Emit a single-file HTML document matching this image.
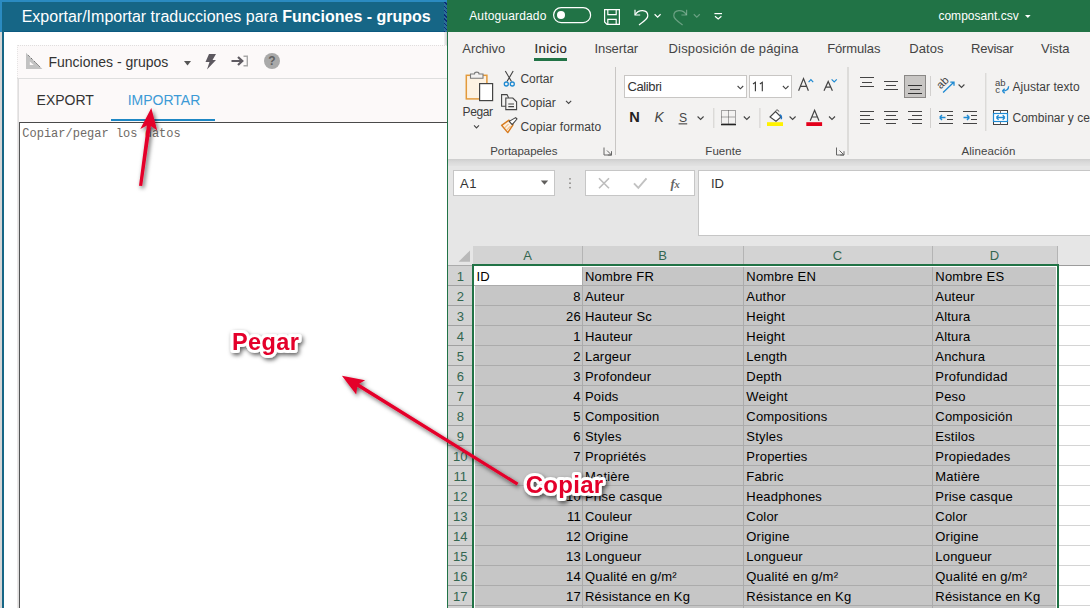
<!DOCTYPE html>
<html><head><meta charset="utf-8"><style>
html,body{margin:0;padding:0}
body{width:1090px;height:608px;overflow:hidden;position:relative;background:#d6d6d6;font-family:"Liberation Sans",sans-serif}
.a{position:absolute}
.t{position:absolute;white-space:pre;line-height:1;font-family:"Liberation Sans",sans-serif}
.m{position:absolute;white-space:pre;line-height:1;font-family:"Liberation Mono",monospace}
</style></head><body>
<div class="a" style="left:0px;top:0px;width:447px;height:608px;background:#d6d6d6;"></div>
<div class="a" style="left:0px;top:0px;width:447px;height:2px;background:#2b8bc1;"></div>
<div class="a" style="left:0px;top:2px;width:2px;height:30px;background:#2b8bc1;"></div>
<div class="a" style="left:2px;top:2px;width:442px;height:30px;background:#166686;"></div>
<div class="a" style="left:4px;top:31px;width:440px;height:1px;background:#0c5a80;"></div>
<div class="a" style="left:2px;top:2px;width:2px;height:606px;background:#166686;"></div>
<div class="a" style="left:4px;top:32px;width:440px;height:576px;background:#ffffff;"></div>
<div class="a" style="left:444px;top:2px;width:3px;height:30px;background:#1d4f8a;background-image:repeating-linear-gradient(45deg,#0b2c78 0 1px,#2a6e96 1px 3px)"></div>
<div class="a" style="left:444px;top:32px;width:3px;height:576px;background:#e9e9e9;background:linear-gradient(90deg,#f5f5f5,#cfcfcf)"></div>
<div class="a" style="left:17px;top:45px;width:430px;height:33px;background:#fcf9f9;border-top:1px dotted #e0dede;border-left:1px dotted #e6e4e4;box-sizing:border-box"></div>
<div class="a" style="left:17px;top:78px;width:430px;height:1px;background:#dedede;"></div>
<div class="a" style="left:17px;top:79px;width:430px;height:43px;background:#fcf9f9;"></div>
<div class="a" style="left:17px;top:79px;width:2px;height:529px;background:#e2e2e2;background:linear-gradient(90deg,#f0eded,#d9d9d9)"></div>
<div class="a" style="left:111px;top:119px;width:104px;height:2px;background:#1e87c4;"></div>
<div class="a" style="left:19px;top:122px;width:428px;height:1px;background:#4a4a4a;"></div>
<div class="a" style="left:19px;top:122px;width:1px;height:486px;background:#555555;"></div>
<div class="a" style="left:20px;top:123px;width:427px;height:485px;background:#ffffff;"></div>
<svg class="a" style="left:0;top:0" width="447" height="140" viewBox="0 0 447 140">
<path d="M26 52.8 L42.4 69 L26 69 Z" fill="#c2c2c2"/>
<path d="M29.8 61.4 L33.8 65 L29.8 65 Z" fill="#fcf9f9"/>
<path d="M28.3 55.3 l1.3 1.3 M31.1 58.1 l1.3 1.3 M34.2 61.2 l1.3 1.3 M36.3 63.3 l1.3 1.3 M38.4 65.4 l1.3 1.3" stroke="#6a6a6a" stroke-width="1"/>
<path d="M184 61 L191 61 L187.5 65.5 Z" fill="#555"/>
<path d="M209 54 L216 54 L212.5 60 L216 60 L207 69.5 L209.5 62 L205.5 62 Z" fill="#5d5960"/>
<path d="M231.5 61 L242 61 M238 57 L242.3 61 L238 65" stroke="#5f5b62" stroke-width="2.2" fill="none" stroke-linejoin="miter"/>
<path d="M243.5 56.3 L247.3 56.3 L247.3 65.7 L243.5 65.7" stroke="#a8a8a8" stroke-width="1.4" fill="none"/>
<circle cx="272" cy="61" r="8" fill="#a9a9a9"/>
<text x="272" y="65.3" text-anchor="middle" font-family="Liberation Sans" font-weight="bold" font-size="12" fill="#606060">?</text>
</svg>
<div class="a" style="left:447px;top:0px;width:643px;height:32px;background:#217346;"></div>
<div class="a" style="left:447px;top:32px;width:643px;height:127px;background:#f3f2f1;"></div>
<div class="a" style="left:447px;top:159px;width:643px;height:7px;background:#d4d4d4;background:linear-gradient(180deg,#cdcdcd 0,#d6d6d6 2px,#dcdcdc 4px,#e2e2e2 7px)"></div>
<div class="a" style="left:447px;top:166px;width:643px;height:80px;background:#e6e6e6;"></div>
<div class="a" style="left:447px;top:32px;width:1px;height:576px;background:#217346;"></div>
<div class="a" style="left:534px;top:58px;width:33px;height:2.6px;background:#217346;"></div>
<div class="a" style="left:453px;top:170px;width:102px;height:26px;background:#ffffff;border:1px solid #c6c6c6;box-sizing:border-box"></div>
<div class="a" style="left:585px;top:170px;width:110px;height:26px;background:#ffffff;border:1px solid #c6c6c6;box-sizing:border-box"></div>
<div class="a" style="left:698px;top:170px;width:400px;height:66px;background:#ffffff;border:1px solid #c6c6c6;box-sizing:border-box"></div>
<div class="a" style="left:448px;top:246px;width:642px;height:20px;background:#e6e6e6;"></div>
<div class="a" style="left:473px;top:246px;width:585px;height:18px;background:#d3d3d3;"></div>
<div class="a" style="left:582px;top:246px;width:1px;height:18px;background:#b4b4b4;"></div>
<div class="a" style="left:743px;top:246px;width:1px;height:18px;background:#b4b4b4;"></div>
<div class="a" style="left:932px;top:246px;width:1px;height:18px;background:#b4b4b4;"></div>
<div class="a" style="left:1057px;top:246px;width:1px;height:18px;background:#b4b4b4;"></div>
<div class="a" style="left:473px;top:264px;width:586px;height:2px;background:#217346;"></div>
<div class="a" style="left:448px;top:265px;width:25px;height:1px;background:#ababab;"></div>
<div class="a" style="left:1059px;top:265px;width:31px;height:1px;background:#9c9c9c;"></div>
<div class="a" style="left:448px;top:266px;width:24px;height:342px;background:#d2d2d2;"></div>
<div class="a" style="left:472px;top:264px;width:2px;height:344px;background:#217346;"></div>
<div class="a" style="left:474px;top:266px;width:583px;height:342px;background:#c6c6c6;"></div>
<div class="a" style="left:474px;top:266px;width:1px;height:342px;background:#ffffff;"></div>
<div class="a" style="left:474px;top:266px;width:582px;height:1px;background:#ffffff;"></div>
<div class="a" style="left:1056px;top:266px;width:1px;height:342px;background:#ffffff;"></div>
<div class="a" style="left:1057px;top:264px;width:2px;height:344px;background:#217346;"></div>
<div class="a" style="left:1059px;top:266px;width:31px;height:342px;background:#ffffff;"></div>
<div class="a" style="left:474px;top:266px;width:108px;height:19px;background:#ffffff;"></div>
<div class="a" style="left:448px;top:285px;width:24px;height:1px;background:#a0a0a0;"></div>
<div class="a" style="left:474px;top:285px;width:581px;height:1px;background:#ababab;"></div>
<div class="a" style="left:1059px;top:285px;width:31px;height:1px;background:#d4d4d4;"></div>
<div class="a" style="left:448px;top:305px;width:24px;height:1px;background:#a0a0a0;"></div>
<div class="a" style="left:475px;top:305px;width:581px;height:1px;background:#ababab;"></div>
<div class="a" style="left:1059px;top:305px;width:31px;height:1px;background:#d4d4d4;"></div>
<div class="a" style="left:448px;top:325px;width:24px;height:1px;background:#a0a0a0;"></div>
<div class="a" style="left:475px;top:325px;width:581px;height:1px;background:#ababab;"></div>
<div class="a" style="left:1059px;top:325px;width:31px;height:1px;background:#d4d4d4;"></div>
<div class="a" style="left:448px;top:345px;width:24px;height:1px;background:#a0a0a0;"></div>
<div class="a" style="left:475px;top:345px;width:581px;height:1px;background:#ababab;"></div>
<div class="a" style="left:1059px;top:345px;width:31px;height:1px;background:#d4d4d4;"></div>
<div class="a" style="left:448px;top:365px;width:24px;height:1px;background:#a0a0a0;"></div>
<div class="a" style="left:475px;top:365px;width:581px;height:1px;background:#ababab;"></div>
<div class="a" style="left:1059px;top:365px;width:31px;height:1px;background:#d4d4d4;"></div>
<div class="a" style="left:448px;top:385px;width:24px;height:1px;background:#a0a0a0;"></div>
<div class="a" style="left:475px;top:385px;width:581px;height:1px;background:#ababab;"></div>
<div class="a" style="left:1059px;top:385px;width:31px;height:1px;background:#d4d4d4;"></div>
<div class="a" style="left:448px;top:405px;width:24px;height:1px;background:#a0a0a0;"></div>
<div class="a" style="left:475px;top:405px;width:581px;height:1px;background:#ababab;"></div>
<div class="a" style="left:1059px;top:405px;width:31px;height:1px;background:#d4d4d4;"></div>
<div class="a" style="left:448px;top:425px;width:24px;height:1px;background:#a0a0a0;"></div>
<div class="a" style="left:475px;top:425px;width:581px;height:1px;background:#ababab;"></div>
<div class="a" style="left:1059px;top:425px;width:31px;height:1px;background:#d4d4d4;"></div>
<div class="a" style="left:448px;top:445px;width:24px;height:1px;background:#a0a0a0;"></div>
<div class="a" style="left:475px;top:445px;width:581px;height:1px;background:#ababab;"></div>
<div class="a" style="left:1059px;top:445px;width:31px;height:1px;background:#d4d4d4;"></div>
<div class="a" style="left:448px;top:465px;width:24px;height:1px;background:#a0a0a0;"></div>
<div class="a" style="left:475px;top:465px;width:581px;height:1px;background:#ababab;"></div>
<div class="a" style="left:1059px;top:465px;width:31px;height:1px;background:#d4d4d4;"></div>
<div class="a" style="left:448px;top:485px;width:24px;height:1px;background:#a0a0a0;"></div>
<div class="a" style="left:475px;top:485px;width:581px;height:1px;background:#ababab;"></div>
<div class="a" style="left:1059px;top:485px;width:31px;height:1px;background:#d4d4d4;"></div>
<div class="a" style="left:448px;top:505px;width:24px;height:1px;background:#a0a0a0;"></div>
<div class="a" style="left:475px;top:505px;width:581px;height:1px;background:#ababab;"></div>
<div class="a" style="left:1059px;top:505px;width:31px;height:1px;background:#d4d4d4;"></div>
<div class="a" style="left:448px;top:525px;width:24px;height:1px;background:#a0a0a0;"></div>
<div class="a" style="left:475px;top:525px;width:581px;height:1px;background:#ababab;"></div>
<div class="a" style="left:1059px;top:525px;width:31px;height:1px;background:#d4d4d4;"></div>
<div class="a" style="left:448px;top:545px;width:24px;height:1px;background:#a0a0a0;"></div>
<div class="a" style="left:475px;top:545px;width:581px;height:1px;background:#ababab;"></div>
<div class="a" style="left:1059px;top:545px;width:31px;height:1px;background:#d4d4d4;"></div>
<div class="a" style="left:448px;top:565px;width:24px;height:1px;background:#a0a0a0;"></div>
<div class="a" style="left:475px;top:565px;width:581px;height:1px;background:#ababab;"></div>
<div class="a" style="left:1059px;top:565px;width:31px;height:1px;background:#d4d4d4;"></div>
<div class="a" style="left:448px;top:585px;width:24px;height:1px;background:#a0a0a0;"></div>
<div class="a" style="left:475px;top:585px;width:581px;height:1px;background:#ababab;"></div>
<div class="a" style="left:1059px;top:585px;width:31px;height:1px;background:#d4d4d4;"></div>
<div class="a" style="left:448px;top:605px;width:24px;height:1px;background:#a0a0a0;"></div>
<div class="a" style="left:475px;top:605px;width:581px;height:1px;background:#ababab;"></div>
<div class="a" style="left:1059px;top:605px;width:31px;height:1px;background:#d4d4d4;"></div>
<div class="a" style="left:582px;top:267px;width:1px;height:341px;background:#ababab;"></div>
<div class="a" style="left:743px;top:267px;width:1px;height:341px;background:#ababab;"></div>
<div class="a" style="left:932px;top:267px;width:1px;height:341px;background:#ababab;"></div>
<svg class="a" style="left:0;top:0" width="1090" height="608" viewBox="0 0 1090 608">
<g fill="none" stroke="#fff" stroke-width="1.2">
<rect x="553.6" y="7.6" width="37" height="15" rx="7.5"/>
<path d="M604.6 9.6 H619.4 V24.4 H607 L604.6 22 Z"/>
<path d="M607.8 9.6 V14.6 H616.2 V9.6"/>
<path d="M607.8 24.4 V19.4 H616.2 V24.4"/>
<path d="M635 9.8 V15 H640.2"/>
<path d="M635.2 14.8 C638.5 9, 647.8 9.2, 647.8 15.8 C647.8 18, 646.5 19.5, 639 25"/>
<path d="M654.6 14.3 L657.6 17.1 L660.6 14.3"/>
<path d="M714.4 13.6 H722"/>
<path d="M715 16.2 L718.2 19 L721.4 16.2"/>
</g>
<g fill="none" stroke="rgba(255,255,255,0.33)" stroke-width="1.2">
<path d="M686.6 9.8 V15 H681.4"/>
<path d="M686.4 14.8 C683.1 9, 673.8 9.2, 673.8 15.8 C673.8 18, 675.1 19.5, 682.6 25"/>
<path d="M693.8 14.3 L696.8 17.1 L699.8 14.3"/>
</g>
<circle cx="561" cy="15.1" r="4" fill="#fff"/>
<path d="M1025 15 H1030.6 L1027.8 17.9 Z" fill="#fff"/>

<!-- Portapapeles -->
<rect x="466.3" y="75.3" width="20.6" height="23.6" fill="#fdf2e2" stroke="#e39a3b" stroke-width="1.5"/>
<path d="M470.5 78.3 V74 H474.5 C474.5 71.5, 479 71.5, 479 74 H483 V78.3 Z" fill="#f3f2f1" stroke="#7a7a7a" stroke-width="1.1"/>
<rect x="479.6" y="83.6" width="13" height="17" fill="#fff" stroke="#444" stroke-width="1.2"/>
<path d="M474 125.4 L476.5 127.9 L479 125.4" fill="none" stroke="#444" stroke-width="1.1"/>
<g stroke="#444" stroke-width="1.1" fill="none">
<path d="M505.3 71 L511.5 81.5 M513.2 71 L507 81.5"/>
</g>
<circle cx="506.3" cy="84" r="2" fill="none" stroke="#1f8ad2" stroke-width="1.3"/>
<circle cx="512.3" cy="84" r="2" fill="none" stroke="#1f8ad2" stroke-width="1.3"/>
<g stroke="#444" stroke-width="1.1" fill="none">
<path d="M508.6 97.8 L507 94.6 H501.6 V106.2 H505.8"/>
<path d="M505.8 98 H512.8 L516.6 101.8 V109.6 H505.8 Z"/>
<path d="M508.3 104 H514 M508.3 106.6 H514"/>
<path d="M566 100.8 L568.6 103.4 L571.2 100.8"/>
</g>
<path d="M501.6 125.3 L509 120.2 L513 124.8 L507.8 132.6 Z" fill="#fdeedd" stroke="#d77b1e" stroke-width="1.4" stroke-linejoin="round"/>
<path d="M504.5 128 L508.5 124 M506.5 130.2 L510.5 126" stroke="#e9a45a" stroke-width="0.9"/>
<path d="M509.2 121.4 L515.6 117.6 L517 119 L512.2 124.6 Z" fill="#fff" stroke="#444" stroke-width="1.1" stroke-linejoin="round"/>
<path d="M604 147.5 V155 H611.8 M607 150.5 L611.5 155 M611.5 151.2 V155 H607.8" fill="none" stroke="#666" stroke-width="1"/>
<rect x="615" y="67" width="1" height="88" fill="#c8c6c4"/>
<rect x="847.5" y="67" width="1" height="88" fill="#c8c6c4"/>
<rect x="985.3" y="73" width="1" height="58" fill="#d2d0ce"/>

<!-- Fuente -->
<rect x="624.5" y="75.5" width="122" height="22" fill="#fff" stroke="#c8c6c4"/>
<rect x="749.5" y="75.5" width="42" height="22" fill="#fff" stroke="#c8c6c4"/>
<g fill="none" stroke="#444" stroke-width="1.1">
<path d="M737.6 86 L740.4 88.8 L743.2 86"/>
<path d="M782.9 86 L785.7 88.8 L788.5 86"/>
<path d="M697.6 116.5 L700.6 119.5 L703.6 116.5"/>
<path d="M743.8 116.5 L746.8 119.5 L749.8 116.5"/>
<path d="M789.6 116.5 L792.6 119.5 L795.6 116.5"/>
<path d="M829 116.5 L832 119.5 L835 116.5"/>
<path d="M836.5 147.5 V155 H844 M839.5 150.5 L844 155 M844 151.2 V155 H840.3" stroke="#666" stroke-width="1"/>
</g>
<path d="M798.6 90.8 L803.5 78.6 L808.4 90.8 M800.4 86.3 H806.6" stroke="#444" stroke-width="1.2" fill="none"/>
<path d="M824 90.8 L828.2 81.4 L832.4 90.8 M825.6 87.2 H830.8" stroke="#444" stroke-width="1.2" fill="none"/>
<path d="M808.6 82.2 L810.9 79.6 L813.2 82.2" fill="none" stroke="#1f8ad2" stroke-width="1.2"/>
<path d="M831.6 79.4 L834.2 82 L836.8 79.4" fill="none" stroke="#1f8ad2" stroke-width="1.2"/>
<text x="629.3" y="122" font-family="Liberation Sans" font-weight="bold" font-size="14.6" fill="#222">N</text>
<text x="654.4" y="122" font-family="Liberation Sans" font-style="italic" font-size="13.8" fill="#444">K</text>
<text x="679" y="122" font-family="Liberation Sans" font-size="13.5" fill="#444" transform="translate(679,122) scale(0.9,1) translate(-679,-122)">S</text>
<rect x="678.6" y="123.3" width="8.6" height="1.1" fill="#444"/>
<rect x="713.3" y="108" width="1" height="20" fill="#d2d0ce"/>
<rect x="759.4" y="108" width="1" height="20" fill="#d2d0ce"/>
<path d="M721.5 110.5 H735.5 V123.5 H721.5 Z M728.5 110.5 V123.5 M721.5 117 H735.5" fill="none" stroke="#555" stroke-width="1" stroke-dasharray="1 1"/>
<rect x="721" y="124" width="15" height="1.3" fill="#222"/>
<path d="M770 117 L775.5 111.5 L781 117 L776 121.2 Z" fill="#fff" stroke="#444" stroke-width="1.1"/>
<path d="M775.5 111 C776.5 109.5, 778.5 109.8, 778.8 111.5" fill="none" stroke="#444" stroke-width="1"/><path d="M779.8 114 C781.8 114.5, 782.6 116.5, 782 119.3 L780.6 119.3 C780.8 117.5, 780.5 116, 779.6 115.2 Z" fill="#1f74c4"/>
<rect x="767" y="122.2" width="16" height="3.8" fill="#fff200"/>
<path d="M810.2 120.8 L814.6 110.2 L819 120.8 M811.8 117 H817.4" stroke="#444" stroke-width="1.2" fill="none"/>
<rect x="806.3" y="122.2" width="15.8" height="3.8" fill="#e3001b"/>

<path d="M755.4 91.2 V82.4 L753 84 M762.3 91.2 V82.4 L759.9 84" stroke="#333" stroke-width="1.1" fill="none"/>
<!-- Alineacion -->
<g stroke="#444" stroke-width="1" fill="none">
<path d="M860 77.5 H874 M862 82.5 H872 M860 86.5 H874"/>
<path d="M884 81.5 H898 M886 85.5 H896 M884 89.5 H898"/>
<path d="M860 111.5 H874 M860 115.5 H870 M860 119.5 H874 M860 123.5 H870"/>
<path d="M884 111.5 H898 M886 115.5 H896 M884 119.5 H898 M886 123.5 H896"/>
<path d="M908 111.5 H922 M912 115.5 H922 M908 119.5 H922 M912 123.5 H922"/>
<path d="M939 111.5 H953 M947 115.5 H953 M947 119.5 H953 M939 123.5 H953"/>
<path d="M963 111.5 H977 M971 115.5 H977 M971 119.5 H977 M963 123.5 H977"/>
</g>
<rect x="904.5" y="75.5" width="21" height="22" fill="#c8c6c4" stroke="#8a8886"/>
<path d="M908 85.5 H922 M910 89.5 H920 M908 93.5 H922" stroke="#333" stroke-width="1" fill="none"/>
<rect x="930" y="76" width="1" height="20" fill="#d2d0ce"/>
<rect x="930" y="108" width="1" height="20" fill="#d2d0ce"/>
<path d="M939.6 117.5 L945.5 117.5 M939.6 117.5 L942 115 M939.6 117.5 L942 120" stroke="#1f8ad2" stroke-width="1.4" fill="none"/>
<path d="M963.5 117.5 L969.4 117.5 M969.4 117.5 L967 115 M969.4 117.5 L967 120" stroke="#1f8ad2" stroke-width="1.4" fill="none"/>
<text x="0" y="0" font-family="Liberation Sans" font-size="11" fill="#444" transform="translate(940.8,89.6) rotate(-45)">ab</text>
<path d="M943.1 92.5 L954 82 M950.3 82.2 H954 V85.8" stroke="#1f8ad2" stroke-width="1.3" fill="none"/>
<path d="M958.6 84.5 L961.5 87.4 L964.4 84.5" fill="none" stroke="#444" stroke-width="1.1"/>
<text x="995" y="85.6" font-family="Liberation Sans" font-size="9.5" fill="#444">ab</text>
<text x="995.2" y="92.6" font-family="Liberation Sans" font-size="9.5" fill="#444">c</text>
<path d="M1008.6 86.2 C1008.6 89.8, 1006.5 91, 1002.4 91 M1002.4 91 L1004.7 88.7 M1002.4 91 L1004.7 93.3" stroke="#1f8ad2" stroke-width="1.3" fill="none"/>
<rect x="993.5" y="110.5" width="14" height="14" fill="#fff" stroke="#444" stroke-width="1"/>
<path d="M1000.5 110.5 V113.5 M1000.5 121.5 V124.5" stroke="#7a6a66" stroke-width="1" fill="none"/>
<rect x="993.5" y="113.5" width="14" height="8" fill="#fff" stroke="#1f8ad2" stroke-width="1.2"/>
<path d="M996.5 117.5 H1004.8 M996.3 117.5 L998.6 115.3 M996.3 117.5 L998.6 119.7 M1005 117.5 L1002.7 115.3 M1005 117.5 L1002.7 119.7" stroke="#1f8ad2" stroke-width="1.3" fill="none"/>

<!-- formula bar -->
<path d="M540.8 180.4 H548.2 L544.5 184.8 Z" fill="#605e5c"/>
<circle cx="570" cy="178.8" r="0.9" fill="#8a8886"/><circle cx="570" cy="183.2" r="0.9" fill="#8a8886"/><circle cx="570" cy="187.6" r="0.9" fill="#8a8886"/>
<path d="M599 178.3 L609 188.3 M609 178.3 L599 188.3" stroke="#bdbdbd" stroke-width="1.6"/>
<path d="M634 183.3 L638.3 187.8 L646.5 178.3" stroke="#c2c2c2" stroke-width="1.9" fill="none"/>
<text x="670.5" y="187.5" font-family="Liberation Serif" font-style="italic" font-weight="bold" font-size="13" fill="#666">f</text>
<text x="674.5" y="187.5" font-family="Liberation Serif" font-style="italic" font-weight="bold" font-size="10.5" fill="#666">x</text>
<path d="M458.6 261.8 L470 250.4 V261.8 Z" fill="#b9b9b9"/>
</svg>

<div class="t" style="left:21.70px;top:9.00px;font-size:16px;color:#ffffff;">Exportar/Importar traducciones para </div>
<div class="t" style="left:282.30px;top:9.00px;font-size:16px;color:#ffffff;font-weight:bold;">Funciones - grupos</div>
<div class="t" style="left:48.50px;top:54.80px;font-size:14px;color:#333333;">Funciones - grupos</div>
<div class="t" style="left:36.60px;top:93.10px;font-size:14px;color:#333333;">EXPORT</div>
<div class="t" style="left:127.70px;top:93.10px;font-size:14px;color:#3c9ad6;">IMPORTAR</div>
<div class="m" style="left:22.30px;top:127.68px;font-size:12px;color:#6e6a66;">Copiar/pegar los datos</div>
<div class="t" style="left:469.20px;top:9.60px;font-size:12px;color:#ffffff;letter-spacing:0.163px;">Autoguardado</div>
<div class="t" style="left:938.40px;top:9.80px;font-size:12px;color:#ffffff;letter-spacing:0.029px;">composant.csv</div>
<div class="t" style="left:462.30px;top:41.85px;font-size:13px;color:#444444;letter-spacing:-0.060px;">Archivo</div>
<div class="t" style="left:534.60px;top:41.85px;font-size:13px;color:#252423;letter-spacing:0.368px;-webkit-text-stroke:0.12px #252423;">Inicio</div>
<div class="t" style="left:594.40px;top:41.85px;font-size:13px;color:#444444;letter-spacing:-0.040px;">Insertar</div>
<div class="t" style="left:668.60px;top:41.85px;font-size:13px;color:#444444;letter-spacing:0.140px;">Disposición de página</div>
<div class="t" style="left:827.20px;top:41.85px;font-size:13px;color:#444444;letter-spacing:-0.141px;">Fórmulas</div>
<div class="t" style="left:909.30px;top:41.85px;font-size:13px;color:#444444;letter-spacing:0.033px;">Datos</div>
<div class="t" style="left:971.00px;top:41.85px;font-size:13px;color:#444444;letter-spacing:-0.246px;">Revisar</div>
<div class="t" style="left:1041.00px;top:41.85px;font-size:13px;color:#444444;letter-spacing:-0.018px;">Vista</div>
<div class="t" style="left:462.50px;top:106.30px;font-size:12px;color:#3e3e3e;letter-spacing:-0.358px;">Pegar</div>
<div class="t" style="left:520.40px;top:73.20px;font-size:12px;color:#3e3e3e;letter-spacing:-0.049px;">Cortar</div>
<div class="t" style="left:520.40px;top:97.20px;font-size:12px;color:#3e3e3e;letter-spacing:0.008px;">Copiar</div>
<div class="t" style="left:520.40px;top:121.00px;font-size:12px;color:#3e3e3e;letter-spacing:0.110px;">Copiar formato</div>
<div class="t" style="left:490.20px;top:145.72px;font-size:11.5px;color:#444444;letter-spacing:-0.044px;">Portapapeles</div>
<div class="t" style="left:627.50px;top:79.95px;font-size:13px;color:#333333;letter-spacing:-0.391px;">Calibri</div>
<div class="t" style="left:705.30px;top:145.53px;font-size:11.5px;color:#444444;letter-spacing:0.077px;">Fuente</div>
<div class="t" style="left:961.40px;top:145.53px;font-size:11.5px;color:#444444;letter-spacing:0.091px;">Alineación</div>
<div class="t" style="left:1012.50px;top:80.50px;font-size:12px;color:#3e3e3e;letter-spacing:0.033px;">Ajustar texto</div>
<div class="t" style="left:1012.50px;top:112.30px;font-size:12px;color:#3e3e3e;">Combinar y centrar</div>
<div class="t" style="left:460.00px;top:176.95px;font-size:13px;color:#333333;letter-spacing:0.694px;">A1</div>
<div class="t" style="left:711.00px;top:176.95px;font-size:13px;color:#333333;">ID</div>
<div class="t" style="left:523.16px;top:248.95px;font-size:13px;color:#336650;">A</div>
<div class="t" style="left:658.16px;top:248.95px;font-size:13px;color:#336650;">B</div>
<div class="t" style="left:832.80px;top:248.95px;font-size:13px;color:#336650;">C</div>
<div class="t" style="left:989.80px;top:248.95px;font-size:13px;color:#336650;">D</div>
<div class="t" style="left:456.68px;top:270.25px;font-size:13px;color:#336650;">1</div>
<div class="t" style="left:476.50px;top:270.25px;font-size:13px;color:#000000;letter-spacing:0.2px;">ID</div>
<div class="t" style="left:585.00px;top:270.25px;font-size:13px;color:#000000;letter-spacing:0.2px;">Nombre FR</div>
<div class="t" style="left:746.30px;top:270.25px;font-size:13px;color:#000000;letter-spacing:0.2px;">Nombre EN</div>
<div class="t" style="left:935.30px;top:270.25px;font-size:13px;color:#000000;letter-spacing:0.2px;">Nombre ES</div>
<div class="t" style="left:456.68px;top:290.25px;font-size:13px;color:#336650;">2</div>
<div class="t" style="left:573.27px;top:290.25px;font-size:13px;color:#000000;letter-spacing:0.2px;">8</div>
<div class="t" style="left:585.00px;top:290.25px;font-size:13px;color:#000000;letter-spacing:0.2px;">Auteur</div>
<div class="t" style="left:746.30px;top:290.25px;font-size:13px;color:#000000;letter-spacing:0.2px;">Author</div>
<div class="t" style="left:935.30px;top:290.25px;font-size:13px;color:#000000;letter-spacing:0.2px;">Auteur</div>
<div class="t" style="left:456.68px;top:310.25px;font-size:13px;color:#336650;">3</div>
<div class="t" style="left:566.03px;top:310.25px;font-size:13px;color:#000000;letter-spacing:0.2px;">26</div>
<div class="t" style="left:585.00px;top:310.25px;font-size:13px;color:#000000;letter-spacing:0.2px;">Hauteur Sc</div>
<div class="t" style="left:746.30px;top:310.25px;font-size:13px;color:#000000;letter-spacing:0.2px;">Height</div>
<div class="t" style="left:935.30px;top:310.25px;font-size:13px;color:#000000;letter-spacing:0.2px;">Altura</div>
<div class="t" style="left:456.68px;top:330.25px;font-size:13px;color:#336650;">4</div>
<div class="t" style="left:573.27px;top:330.25px;font-size:13px;color:#000000;letter-spacing:0.2px;">1</div>
<div class="t" style="left:585.00px;top:330.25px;font-size:13px;color:#000000;letter-spacing:0.2px;">Hauteur</div>
<div class="t" style="left:746.30px;top:330.25px;font-size:13px;color:#000000;letter-spacing:0.2px;">Height</div>
<div class="t" style="left:935.30px;top:330.25px;font-size:13px;color:#000000;letter-spacing:0.2px;">Altura</div>
<div class="t" style="left:456.68px;top:350.25px;font-size:13px;color:#336650;">5</div>
<div class="t" style="left:573.27px;top:350.25px;font-size:13px;color:#000000;letter-spacing:0.2px;">2</div>
<div class="t" style="left:585.00px;top:350.25px;font-size:13px;color:#000000;letter-spacing:0.2px;">Largeur</div>
<div class="t" style="left:746.30px;top:350.25px;font-size:13px;color:#000000;letter-spacing:0.2px;">Length</div>
<div class="t" style="left:935.30px;top:350.25px;font-size:13px;color:#000000;letter-spacing:0.2px;">Anchura</div>
<div class="t" style="left:456.68px;top:370.25px;font-size:13px;color:#336650;">6</div>
<div class="t" style="left:573.27px;top:370.25px;font-size:13px;color:#000000;letter-spacing:0.2px;">3</div>
<div class="t" style="left:585.00px;top:370.25px;font-size:13px;color:#000000;letter-spacing:0.2px;">Profondeur</div>
<div class="t" style="left:746.30px;top:370.25px;font-size:13px;color:#000000;letter-spacing:0.2px;">Depth</div>
<div class="t" style="left:935.30px;top:370.25px;font-size:13px;color:#000000;letter-spacing:0.2px;">Profundidad</div>
<div class="t" style="left:456.68px;top:390.25px;font-size:13px;color:#336650;">7</div>
<div class="t" style="left:573.27px;top:390.25px;font-size:13px;color:#000000;letter-spacing:0.2px;">4</div>
<div class="t" style="left:585.00px;top:390.25px;font-size:13px;color:#000000;letter-spacing:0.2px;">Poids</div>
<div class="t" style="left:746.30px;top:390.25px;font-size:13px;color:#000000;letter-spacing:0.2px;">Weight</div>
<div class="t" style="left:935.30px;top:390.25px;font-size:13px;color:#000000;letter-spacing:0.2px;">Peso</div>
<div class="t" style="left:456.68px;top:410.25px;font-size:13px;color:#336650;">8</div>
<div class="t" style="left:573.27px;top:410.25px;font-size:13px;color:#000000;letter-spacing:0.2px;">5</div>
<div class="t" style="left:585.00px;top:410.25px;font-size:13px;color:#000000;letter-spacing:0.2px;">Composition</div>
<div class="t" style="left:746.30px;top:410.25px;font-size:13px;color:#000000;letter-spacing:0.2px;">Compositions</div>
<div class="t" style="left:935.30px;top:410.25px;font-size:13px;color:#000000;letter-spacing:0.2px;">Composición</div>
<div class="t" style="left:456.68px;top:430.25px;font-size:13px;color:#336650;">9</div>
<div class="t" style="left:573.27px;top:430.25px;font-size:13px;color:#000000;letter-spacing:0.2px;">6</div>
<div class="t" style="left:585.00px;top:430.25px;font-size:13px;color:#000000;letter-spacing:0.2px;">Styles</div>
<div class="t" style="left:746.30px;top:430.25px;font-size:13px;color:#000000;letter-spacing:0.2px;">Styles</div>
<div class="t" style="left:935.30px;top:430.25px;font-size:13px;color:#000000;letter-spacing:0.2px;">Estilos</div>
<div class="t" style="left:453.07px;top:450.25px;font-size:13px;color:#336650;">10</div>
<div class="t" style="left:573.27px;top:450.25px;font-size:13px;color:#000000;letter-spacing:0.2px;">7</div>
<div class="t" style="left:585.00px;top:450.25px;font-size:13px;color:#000000;letter-spacing:0.2px;">Propriétés</div>
<div class="t" style="left:746.30px;top:450.25px;font-size:13px;color:#000000;letter-spacing:0.2px;">Properties</div>
<div class="t" style="left:935.30px;top:450.25px;font-size:13px;color:#000000;letter-spacing:0.2px;">Propiedades</div>
<div class="t" style="left:453.55px;top:470.25px;font-size:13px;color:#336650;">11</div>
<div class="t" style="left:573.27px;top:470.25px;font-size:13px;color:#000000;letter-spacing:0.2px;">9</div>
<div class="t" style="left:585.00px;top:470.25px;font-size:13px;color:#000000;letter-spacing:0.2px;">Matière</div>
<div class="t" style="left:746.30px;top:470.25px;font-size:13px;color:#000000;letter-spacing:0.2px;">Fabric</div>
<div class="t" style="left:935.30px;top:470.25px;font-size:13px;color:#000000;letter-spacing:0.2px;">Matière</div>
<div class="t" style="left:453.07px;top:490.25px;font-size:13px;color:#336650;">12</div>
<div class="t" style="left:566.03px;top:490.25px;font-size:13px;color:#000000;letter-spacing:0.2px;">10</div>
<div class="t" style="left:585.00px;top:490.25px;font-size:13px;color:#000000;letter-spacing:0.2px;">Prise casque</div>
<div class="t" style="left:746.30px;top:490.25px;font-size:13px;color:#000000;letter-spacing:0.2px;">Headphones</div>
<div class="t" style="left:935.30px;top:490.25px;font-size:13px;color:#000000;letter-spacing:0.2px;">Prise casque</div>
<div class="t" style="left:453.07px;top:510.25px;font-size:13px;color:#336650;">13</div>
<div class="t" style="left:567.00px;top:510.25px;font-size:13px;color:#000000;letter-spacing:0.2px;">11</div>
<div class="t" style="left:585.00px;top:510.25px;font-size:13px;color:#000000;letter-spacing:0.2px;">Couleur</div>
<div class="t" style="left:746.30px;top:510.25px;font-size:13px;color:#000000;letter-spacing:0.2px;">Color</div>
<div class="t" style="left:935.30px;top:510.25px;font-size:13px;color:#000000;letter-spacing:0.2px;">Color</div>
<div class="t" style="left:453.07px;top:530.25px;font-size:13px;color:#336650;">14</div>
<div class="t" style="left:566.03px;top:530.25px;font-size:13px;color:#000000;letter-spacing:0.2px;">12</div>
<div class="t" style="left:585.00px;top:530.25px;font-size:13px;color:#000000;letter-spacing:0.2px;">Origine</div>
<div class="t" style="left:746.30px;top:530.25px;font-size:13px;color:#000000;letter-spacing:0.2px;">Origine</div>
<div class="t" style="left:935.30px;top:530.25px;font-size:13px;color:#000000;letter-spacing:0.2px;">Origine</div>
<div class="t" style="left:453.07px;top:550.25px;font-size:13px;color:#336650;">15</div>
<div class="t" style="left:566.03px;top:550.25px;font-size:13px;color:#000000;letter-spacing:0.2px;">13</div>
<div class="t" style="left:585.00px;top:550.25px;font-size:13px;color:#000000;letter-spacing:0.2px;">Longueur</div>
<div class="t" style="left:746.30px;top:550.25px;font-size:13px;color:#000000;letter-spacing:0.2px;">Longueur</div>
<div class="t" style="left:935.30px;top:550.25px;font-size:13px;color:#000000;letter-spacing:0.2px;">Longueur</div>
<div class="t" style="left:453.07px;top:570.25px;font-size:13px;color:#336650;">16</div>
<div class="t" style="left:566.03px;top:570.25px;font-size:13px;color:#000000;letter-spacing:0.2px;">14</div>
<div class="t" style="left:585.00px;top:570.25px;font-size:13px;color:#000000;letter-spacing:0.2px;">Qualité en g/m²</div>
<div class="t" style="left:746.30px;top:570.25px;font-size:13px;color:#000000;letter-spacing:0.2px;">Qualité en g/m²</div>
<div class="t" style="left:935.30px;top:570.25px;font-size:13px;color:#000000;letter-spacing:0.2px;">Qualité en g/m²</div>
<div class="t" style="left:453.07px;top:590.25px;font-size:13px;color:#336650;">17</div>
<div class="t" style="left:566.03px;top:590.25px;font-size:13px;color:#000000;letter-spacing:0.2px;">17</div>
<div class="t" style="left:585.00px;top:590.25px;font-size:13px;color:#000000;letter-spacing:0.2px;">Résistance en Kg</div>
<div class="t" style="left:746.30px;top:590.25px;font-size:13px;color:#000000;letter-spacing:0.2px;">Résistance en Kg</div>
<div class="t" style="left:935.30px;top:590.25px;font-size:13px;color:#000000;letter-spacing:0.2px;">Résistance en Kg</div>
<svg class="a" style="left:0;top:0" width="1090" height="608" viewBox="0 0 1090 608">
<defs>
<filter id="sh" x="-20%" y="-20%" width="140%" height="140%">
<feDropShadow dx="1.6" dy="2.2" stdDeviation="2.2" flood-color="#000" flood-opacity="0.62"/>
</filter>
</defs>
<g filter="url(#sh)" fill="#e4002b">
<path d="M151.3 108.1 L157.2 130.5 L150.9 126.1 L142.2 186.1 L139 185.7 L146.9 125.5 L140.3 128.9 Z"/>
<path d="M341.9 375.7 L365.1 380.3 L359.15 383.67 L518.44 482.84 L516.76 485.56 L357.26 386.73 L356.2 394.6 Z"/>
</g>
<g filter="url(#sh)" font-family="Liberation Sans" font-weight="bold" paint-order="stroke" stroke="#fff" stroke-width="6" stroke-linejoin="round" fill="#e4002b">
<text x="232" y="350.2" font-size="23.5" letter-spacing="0.4">Pegar</text>
<text x="525.7" y="492.9" font-size="24" letter-spacing="0.3">Copiar</text>
</g>
</svg>

</body></html>
